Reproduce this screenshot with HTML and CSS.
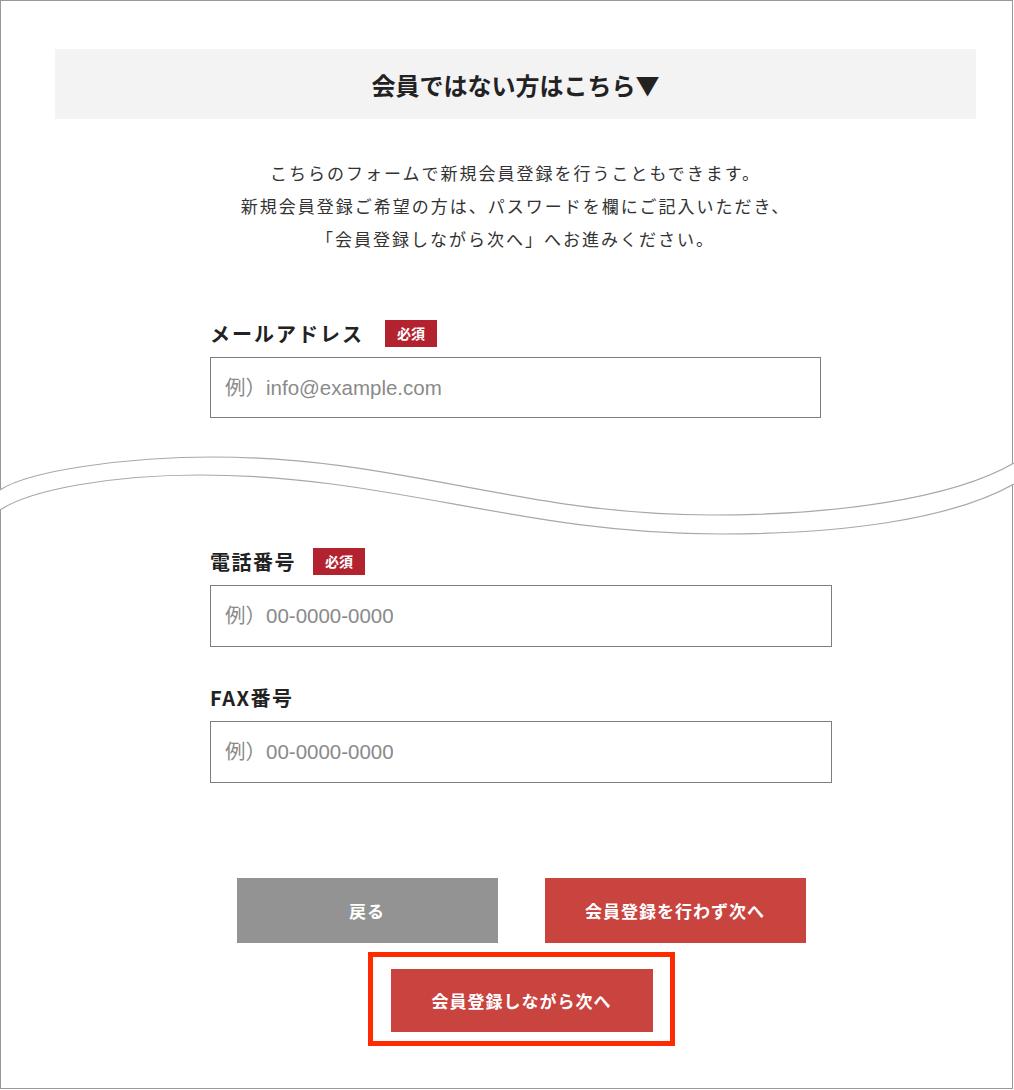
FILE: index.html
```html
<!DOCTYPE html>
<html lang="ja">
<head>
    <meta charset="UTF-8">
    <meta name="viewport" content="width=device-width, initial-scale=1.0">
    <title>会員ではない方はこちら</title>
    <link rel="stylesheet" href="styles.css">
</head>
<body>
    <div class="sheet">
        <section class="sheet-part sheet-part--top">
            <h2 class="lead-bar">会員ではない方はこちら▼</h2>
            <p class="lead-text">
                こちらのフォームで新規会員登録を行うこともできます。<br>
                新規会員登録ご希望の方は、パスワードを欄にご記入いただき、<br>
                「会員登録しながら次へ」へお進みください。
            </p>

            <div class="form form--top">
                <div class="field">
                    <div class="field-label field-label--wide">
                        <span class="field-name field-name--wide">メールアドレス</span>
                        <span class="badge">必須</span>
                    </div>
                    <input class="field-input field-input--short" type="text" placeholder="例）info@example.com">
                </div>
            </div>
        </section>

        <!-- 画面の途中を省略した波線 -->
        <svg class="tear" viewBox="0 0 1014 100" width="1014" height="100" xmlns="http://www.w3.org/2000/svg">
            <path d="M0,50 C30,30 130,17 213,17 C400,17 520,75 712,75 C830,75 950,60 1014,23
                     L1014,44 C950,80 840,94 720,94 C520,94 390,35 200,35 C110,35 30,50 0,70 Z"
                  fill="#fff"/>
            <path d="M0,50 C30,30 130,17 213,17 C400,17 520,75 712,75 C830,75 950,60 1014,23"
                  fill="none" stroke="#a8a8a8" stroke-width="1.2"/>
            <path d="M0,70 C30,50 110,35 200,35 C390,35 520,94 720,94 C840,94 950,80 1014,44"
                  fill="none" stroke="#a8a8a8" stroke-width="1.2"/>
        </svg>

        <section class="sheet-part sheet-part--bottom">
            <div class="form form--bottom">
                <div class="field">
                    <div class="field-label">
                        <span class="field-name">電話番号</span>
                        <span class="badge">必須</span>
                    </div>
                    <input class="field-input" type="text" placeholder="例）00-0000-0000">
                </div>

                <div class="field field--next">
                    <div class="field-label">
                        <span class="field-name">FAX番号</span>
                    </div>
                    <input class="field-input" type="text" placeholder="例）00-0000-0000">
                </div>

                <div class="actions">
                    <button class="btn btn--gray" type="button">戻る</button>
                    <button class="btn btn--red" type="button">会員登録を行わず次へ</button>
                </div>

                <div class="highlight">
                    <button class="btn btn--red" type="button">会員登録しながら次へ</button>
                </div>
            </div>
        </section>
    </div>
</body>
</html>
```

FILE: styles.css
```css
body {
    margin: 0;
    background: #fff;
    color: #222;
    font-family: "Noto Sans CJK JP", "Noto Sans", sans-serif;
}
.sheet {
    position: relative;
    width: 1013px;
}
.sheet-part {
    box-sizing: border-box;
    border-left: 1px solid #999;
    border-right: 1px solid #999;
    padding: 0 36px 0 54px;
}
.sheet-part--top {
    border-top: 1px solid #999;
    padding-top: 48px;
    height: 500px;
}
.sheet-part--bottom {
    border-bottom: 1px solid #999;
    padding-top: 47px;
    padding-bottom: 42px;
}
.tear {
    position: absolute;
    left: 0;
    top: 440px;
    display: block;
}
.lead-bar {
    margin: 0;
    height: 70px;
    display: flex;
    align-items: center;
    justify-content: center;
    background: #f3f3f3;
    font-size: 24px;
    font-weight: 700;
    color: #222;
}
.lead-text {
    margin: 37px 0 0;
    font-size: 17px;
    line-height: 33px;
    letter-spacing: 2px;
    text-align: center;
    color: #333;
}
.form {
    margin-left: 155px;
}
.form--top {
    width: 611px;
    margin-top: 64px;
}
.form--bottom {
    width: 622px;
}
.field-label {
    display: flex;
    align-items: center;
    gap: 17px;
    height: 28px;
    margin-bottom: 10px;
}
.field-label--wide {
    gap: 21px;
}
.field-name {
    font-size: 20px;
    font-weight: 700;
    letter-spacing: 1.5px;
    color: #222;
}
.field-name--wide {
    letter-spacing: 2px;
}
.badge {
    display: flex;
    align-items: center;
    justify-content: center;
    width: 52px;
    height: 27px;
    background: #b3222f;
    color: #fff;
    font-size: 14px;
    font-weight: 700;
}
.field-input {
    display: block;
    box-sizing: border-box;
    width: 100%;
    height: 62px;
    margin: 0;
    padding: 0 14px;
    border: 1px solid #7d7d7d;
    border-radius: 0;
    background: #fff;
    font-family: "Liberation Sans", "Noto Sans CJK JP", sans-serif;
    font-size: 20.5px;
    color: #333;
}
.field-input--short {
    height: 61px;
}
.field-input::placeholder {
    color: #8a8a8a;
}
.field--next {
    margin-top: 36px;
}
.actions {
    display: flex;
    justify-content: center;
    gap: 47px;
    margin-top: 95px;
}
.btn {
    width: 261px;
    height: 65px;
    border: none;
    border-radius: 0;
    padding: 0;
    color: #fff;
    font-family: "Noto Sans CJK JP", sans-serif;
    font-size: 17px;
    font-weight: 700;
    letter-spacing: 1px;
    cursor: pointer;
}
.btn--gray {
    background: #939393;
}
.btn--red {
    background: #c9433f;
}
.highlight {
    box-sizing: border-box;
    width: 307px;
    margin: 9px auto 0;
    padding: 12px 17px 9px 18px;
    border: 5px solid #ff2b00;
}
.highlight .btn {
    display: block;
    width: 262px;
    height: 63px;
}
```
